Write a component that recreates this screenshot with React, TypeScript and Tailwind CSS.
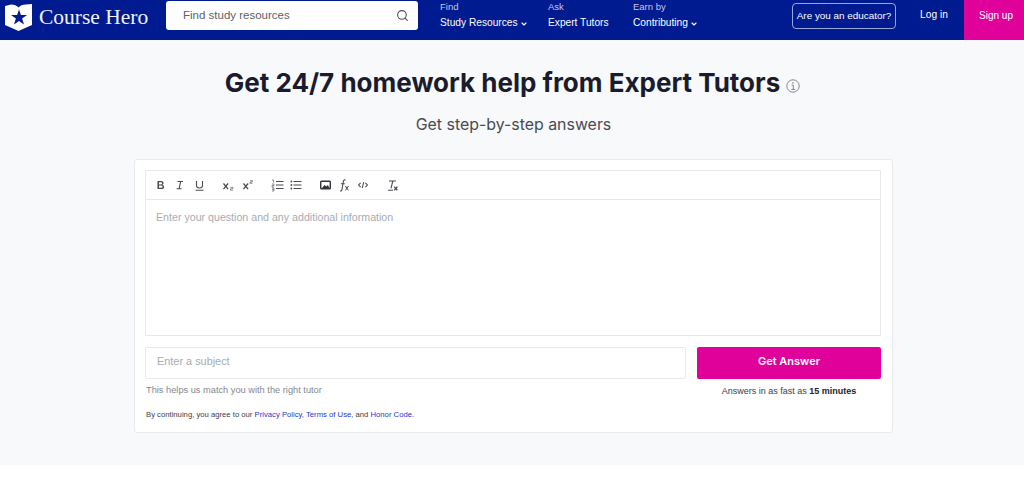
import React from 'react';
import { ChevronDown, Search } from 'lucide-react';

const navItems = [
  { top: 'Find', label: 'Study Resources', caret: true, width: 'w-[108px]' },
  { top: 'Ask', label: 'Expert Tutors', caret: false, width: 'w-[85px]' },
  { top: 'Earn by', label: 'Contributing', caret: true, width: 'w-[100px]' },
];

const Logo = () => (
  <svg width="27" height="27" viewBox="0 0 27 27" className="shrink-0">
    <path d="M0 2 L6 0.5 Q11 0.5 13.5 3.5 Q16 0.5 21 0.5 L27 0 V21 L13.5 27 L0 21 Z" fill="#fff" />
    <path d="M14 5.5 L15.9 11 L22 11 L17.1 14.6 L19 20.5 L14 16.9 L9 20.5 L10.9 14.6 L6 11 L12.1 11 Z" fill="#001a8f" />
  </svg>
);

const Toolbar = () => (
  <div className="flex h-[29px] items-center border-b border-[#e8e9ec] pl-[10px] text-[#4a4b52]">
    <svg width="108" height="16" viewBox="0 0 108 16" className="shrink-0">
      {/* bold */}
      <path d="M1.5 4h3.6q2.5 0 2.5 2 0 1.3-1.2 1.8 1.7.5 1.7 2.1 0 2.1-2.8 2.1H1.5z M3 5.2v2.2h2q1.1 0 1.1-1.1T5 5.2z M3 8.6v2.2h2.3q1.3 0 1.3-1.1T5.3 8.6z" fill="currentColor" />
      {/* italic */}
      <path d="M21.5 4.5h5.5 M24.7 4.5 23.1 11.7 M20.6 11.7h5" stroke="currentColor" strokeWidth="1.1" fill="none" />
      {/* underline */}
      <path d="M40.5 4v4.6q0 2.4 3 2.4t3-2.4V4 M39.5 13.2h8" stroke="currentColor" strokeWidth="1.1" fill="none" />
      {/* subscript */}
      <path d="M67.5 6.5l4.6 5.6 M72.1 6.5l-4.6 5.6" stroke="currentColor" strokeWidth="1.3" fill="none" />
      <path d="M74.5 10.4h2.4v1.4h-2.4v1.4h2.4" stroke="currentColor" strokeWidth="0.6" fill="none" />
      {/* superscript */}
      <path d="M87.5 6.5l4.6 5.6 M92.1 6.5l-4.6 5.6" stroke="currentColor" strokeWidth="1.3" fill="none" />
      <path d="M94 3.6h2.4v1.4H94v1.4h2.4" stroke="currentColor" strokeWidth="0.6" fill="none" />
    </svg>
    <svg width="34" height="16" viewBox="0 0 34 16" className="ml-[7px] shrink-0">
      {/* ordered list */}
      <path d="M5 4.5h7.5 M5 8h7.5 M5 11.5h7.5" stroke="currentColor" strokeWidth="1.2" fill="none" />
      <path d="M1 3h1.6v2.6 M1 7h2v1.5H1V10h2 M1 11h2v3H1 M1 12.5h2" stroke="currentColor" strokeWidth="0.6" fill="none" />
      {/* bullet list */}
      <path d="M22.5 4.5h8 M22.5 8h8 M22.5 11.5h8" stroke="currentColor" strokeWidth="1.2" fill="none" />
      <circle cx="20.4" cy="4.5" r="0.9" fill="currentColor" />
      <circle cx="20.4" cy="8" r="0.9" fill="currentColor" />
      <circle cx="20.4" cy="11.5" r="0.9" fill="currentColor" />
    </svg>
    <svg width="92" height="16" viewBox="0 0 92 16" className="ml-[14px] shrink-0">
      {/* image */}
      <rect x="1.7" y="4.2" width="9.6" height="7.6" rx="0.8" fill="none" stroke="#33343a" strokeWidth="1.4" />
      <path d="M3 11l2.6-3 1.8 1.6 1.4-1.6 1.8 3z" fill="#33343a" />
      {/* formula */}
      <g transform="translate(-2 0)">
        <path d="M23 14q1.6.4 2-1.6l1.4-8q.4-2 2.2-1.4 M23.8 6.8h4" stroke="currentColor" strokeWidth="1.1" fill="none" />
        <path d="M28.4 9l3 4.4 M31.6 9l-3.2 4.4" stroke="currentColor" strokeWidth="1" fill="none" />
      </g>
      {/* code */}
      <path d="M41.6 5.8 39.6 8l2 2.2 M46.4 5.8 48.4 8l-2 2.2 M44.7 5l-1.4 6" stroke="currentColor" strokeWidth="1.1" fill="none" />
      {/* clear format */}
      <g transform="translate(-2 0)">
        <path d="M72 4h7 M75.8 4 74 11.4 M71 13.2h5" stroke="currentColor" strokeWidth="1.1" fill="none" />
        <path d="M77.2 9.6l3.2 3.6 M80.4 9.6l-3.2 3.6" stroke="currentColor" strokeWidth="1.3" fill="none" />
      </g>
    </svg>
  </div>
);

const App: React.FC = () => {
  return (
    <div className="min-h-[482px] bg-white font-['Liberation_Sans',sans-serif]">
      <header className="flex h-10 items-stretch bg-[#001a8f] text-white">
        <div className="flex w-[166px] items-center pl-[5px] pb-[8px] pt-[3px]">
          <Logo />
          <span className="ml-[7px] font-['Liberation_Serif',serif] text-[21.5px] leading-none text-[#f1f2f8]">Course Hero</span>
        </div>
        <div className="mt-[1px] flex h-[29px] w-[252px] items-center justify-between rounded-[3px] bg-white pl-[17px] pr-[9px]">
          <span className="text-[11.5px] text-[#5f6068]">Find study resources</span>
          <Search size={13} className="text-[#4d4e55]" />
        </div>
        <nav className="ml-[22px] flex">
          {navItems.map((item) => (
            <div key={item.top} className={`${item.width}`}>
              <div className="mt-[1px] h-[11px] text-[9.5px] leading-[11px] text-[#c3c8e8]">{item.top}</div>
              <div className="mt-[5px] flex items-center text-[10.2px] leading-[12px]">
                {item.label}
                {item.caret && <ChevronDown size={8} strokeWidth={3.5} className="ml-[2px] mt-[1px]" />}
              </div>
            </div>
          ))}
        </nav>
        <div className="ml-[59px] mt-[3px] flex h-[26px] w-[104px] items-center justify-center rounded-[4px] border border-[#9aa6d8] text-[9.9px]">
          Are you an educator?
        </div>
        <div className="flex w-[68px] items-center justify-center pb-[10px] pl-[8px] text-[10.2px]">Log in</div>
        <div className="flex flex-1 items-center justify-center bg-[#e0009a] pb-[10px] pl-[4px] text-[10px]">Sign up</div>
      </header>

      <main className="h-[425px] bg-[#f8f9fb] pt-[27px]">
        <h1 className="flex items-center justify-center pl-[1px] font-['Inter',sans-serif] text-[26px] font-bold leading-[32px] text-[#1a1b2e]">
          Get 24/7 homework help from Expert Tutors
          <svg width="14" height="14" viewBox="0 0 14 14" className="ml-[6px] mt-[5px] text-[#777a85]">
            <circle cx="7" cy="7" r="6.2" fill="none" stroke="currentColor" strokeWidth="0.9" />
            <path d="M5.6 6.2H7.3V10.4 M5.4 10.4h3.8" fill="none" stroke="currentColor" strokeWidth="0.9" />
            <circle cx="7" cy="4" r="0.8" fill="currentColor" />
          </svg>
        </h1>
        <p className="mt-[16px] pl-[3px] text-center font-['Inter',sans-serif] text-[15.9px] leading-[20px] text-[#4a4b52]">Get step-by-step answers</p>

        <section className="ml-[134px] mt-[24px] h-[274px] w-[759px] rounded-[3px] border border-[#e8e9ec] bg-white pl-[10px] pr-[11px] pt-[10px]">
          <div className="h-[166px] border border-[#e8e9ec]">
            <Toolbar />
            <div className="px-[10px] pt-[10px] text-[10.65px] leading-[14px] text-[#a9abb2]">
              Enter your question and any additional information
            </div>
          </div>

          <div className="mt-[11px] flex gap-[11px]">
            <div className="flex-1">
              <div className="flex h-[32px] items-center rounded-[2px] border border-[#e8e9ec] pb-[3px] pl-[11px] text-[10.9px] text-[#a9abb2]">
                Enter a subject
              </div>
              <p className="mt-[4px] pl-[1px] text-[9.25px] leading-[14px] text-[#85878f]">This helps us match you with the right tutor</p>
            </div>
            <div className="w-[184px]">
              <button className="h-[32px] w-full rounded-[2px] bg-[#e0009a] pb-[3px] font-['Inter',sans-serif] text-[11px] font-semibold text-white">Get Answer</button>
              <p className="mt-[5px] text-center text-[9px] leading-[14px] text-[#3d3e45]">
                Answers in as fast as <span className="font-bold text-[#23242a]">15 minutes</span>
              </p>
            </div>
          </div>
          <p className="mt-[11px] pl-[1px] text-[7.7px] leading-[12px] text-[#3d3e45]">
            By continuing, you agree to our <span className="text-[#2b35c9]">Privacy Policy</span>,{' '}
            <span className="text-[#2b35c9]">Terms of Use</span>, and <span className="text-[#2b35c9]">Honor Code</span>.
          </p>
        </section>
      </main>
    </div>
  );
};

export default App;
